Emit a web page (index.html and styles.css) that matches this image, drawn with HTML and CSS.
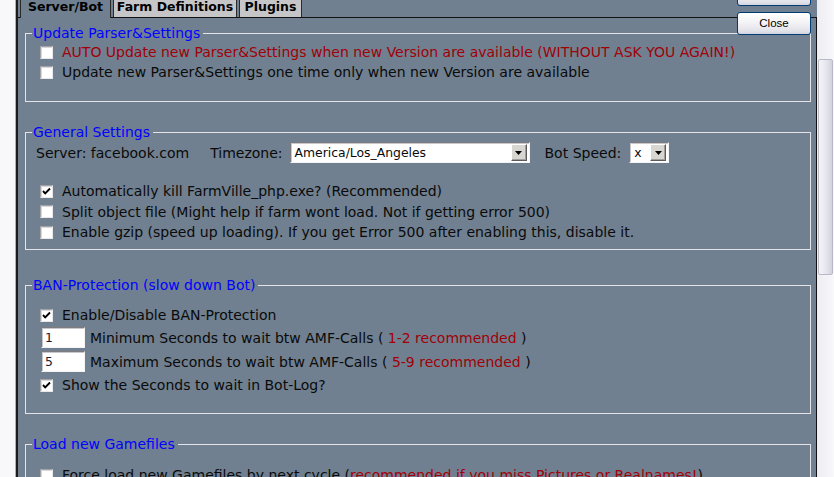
FILE: index.html
```html
<!DOCTYPE html>
<html>
<head>
<meta charset="utf-8">
<title>Settings</title>
<link rel="stylesheet" href="styles.css">
</head>
<body>
<div class="window">
  <div class="strip"></div>
  <div class="main">
    <div class="tabs">
      <div class="tab active tab-server">Server/Bot</div>
      <div class="tab tab-farm">Farm Definitions</div>
      <div class="tab tab-plugins">Plugins</div>
    </div>
    <div class="panel">
      <fieldset class="group g1">
        <legend>Update Parser&amp;Settings</legend>
        <div class="row"><span class="cb"></span><span class="red">AUTO Update new Parser&amp;Settings when new Version are available (WITHOUT ASK YOU AGAIN!)</span></div>
        <div class="row"><span class="cb"></span><span>Update new Parser&amp;Settings one time only when new Version are available</span></div>
      </fieldset>

      <fieldset class="group g2">
        <legend>General Settings</legend>
        <div class="server-row">
          <span class="server">Server: facebook.com</span>
          <span class="lbl-tz">Timezone:</span>
          <div class="select select-tz"><span class="sel-text">America/Los_Angeles</span><span class="sel-btn"><svg width="7" height="4" viewBox="0 0 7 4"><path d="M0 0h7L3.5 4z" fill="#000"/></svg></span></div>
          <span class="lbl-speed">Bot Speed:</span>
          <div class="select select-speed"><span class="sel-text">x</span><span class="sel-btn"><svg width="7" height="4" viewBox="0 0 7 4"><path d="M0 0h7L3.5 4z" fill="#000"/></svg></span></div>
        </div>
        <div class="checks">
          <div class="row r2"><span class="cb checked"><svg width="11" height="11" viewBox="0 0 11 11"><path d="M2 5l2.2 2.3L9 2.5" fill="none" stroke="#000" stroke-width="1.9"/></svg></span><span>Automatically kill FarmVille_php.exe? (Recommended)</span></div>
          <div class="row r2"><span class="cb"></span><span>Split object file (Might help if farm wont load. Not if getting error 500)</span></div>
          <div class="row r2"><span class="cb"></span><span>Enable gzip (speed up loading). If you get Error 500 after enabling this, disable it.</span></div>
        </div>
      </fieldset>

      <fieldset class="group g3">
        <legend>BAN-Protection (slow down Bot)</legend>
        <div class="row first"><span class="cb checked"><svg width="11" height="11" viewBox="0 0 11 11"><path d="M2 5l2.2 2.3L9 2.5" fill="none" stroke="#000" stroke-width="1.9"/></svg></span><span>Enable/Disable BAN-Protection</span></div>
        <div class="num-row"><span class="num">1</span><span>Minimum Seconds to wait btw AMF-Calls ( <span class="red">1-2 recommended</span> )</span></div>
        <div class="num-row"><span class="num">5</span><span>Maximum Seconds to wait btw AMF-Calls ( <span class="red">5-9 recommended</span> )</span></div>
        <div class="row last"><span class="cb checked"><svg width="11" height="11" viewBox="0 0 11 11"><path d="M2 5l2.2 2.3L9 2.5" fill="none" stroke="#000" stroke-width="1.9"/></svg></span><span>Show the Seconds to wait in Bot-Log?</span></div>
      </fieldset>

      <fieldset class="group g4">
        <legend>Load new Gamefiles</legend>
        <div class="row first"><span class="cb"></span><span>Force load new Gamefiles by next cycle (<span class="red">recommended if you miss Pictures or Realnames!</span>)</span></div>
      </fieldset>
    </div>
  </div>
  <div class="scrollbar"><div class="thumb"></div></div>
  <div class="buttons">
    <button class="btn"></button>
    <button class="btn">Close</button>
  </div>
</div>
</body>
</html>
```

FILE: styles.css
```css
* { box-sizing: border-box; }
html, body {
  margin: 0;
  padding: 0;
  width: 834px;
  height: 477px;
  overflow: hidden;
}
body {
  font-family: "DejaVu Sans", Verdana, sans-serif;
  font-size: 14px;
  color: #0a0a0a;
  background: #f8f8fb;
}
.window {
  position: relative;
  display: flex;
  width: 834px;
  height: 477px;
}
.strip {
  width: 16px;
  flex: none;
  background: #f8f8fb;
  border-right: 1px solid #b0b0b6;
}
.main {
  width: 801px;
  flex: none;
  background: #708090;
  border-left: 2px solid #1c1c1c;
  display: flex;
  flex-direction: column;
}
.tabs {
  height: 17px;
  flex: none;
  display: flex;
  align-items: flex-start;
  gap: 2px;
  padding-left: 2px;
}
.tab {
  height: 17px;
  border-left: 1px solid #2a2a2a;
  border-right: 1px solid #2a2a2a;
  background: #c6c6c8;
  font-weight: bold;
  font-size: 12.5px;
  line-height: 1;
  color: #000;
  display: flex;
  align-items: center;
  justify-content: center;
  padding-bottom: 2px;
}
.tab.active {
  background: #708090;
  height: 18px;
  margin-bottom: -1px;
  position: relative;
  z-index: 1;
  padding-bottom: 3px;
}
.tab-server { width: 91px; }
.tab-farm { width: 124px; }
.tab-plugins { width: 63px; }

.panel {
  flex: 1;
  border-top: 1px solid #111;
  border-right: 1px solid #111;
  padding-top: 6px;
}
.group {
  margin: 0 5px 0 7px;
  padding: 0 6px 19px;
  border: 1px solid #e4e4e8;
  min-width: 0;
}
.group legend {
  padding: 0 3px 0 1px;
  color: #0000ff;
  line-height: 18px;
  font-size: 14px;
}
.g2 { margin-top: 21px; padding-bottom: 6.5px; }
.g3 { margin-top: 26px; padding-bottom: 18px; }
.g4 { margin-top: 21px; }

.row {
  display: flex;
  align-items: center;
  height: 20px;
  white-space: nowrap;
}
.row.r2 { height: 20.5px; }
.g3 .row.first { margin-top: 11px; }
.g3 .row.last { margin-top: 2px; }
.g4 .row.first { margin-top: 12px; }

.cb {
  width: 13px;
  height: 13px;
  flex: none;
  margin: 0 9px 0 8px;
  background: #fff;
  border: 1px solid;
  border-color: #a4a4a8 #e8e8ec #e8e8ec #a4a4a8;
  box-shadow: inset 1px 1px 0 #d8d8dc;
  display: flex;
  align-items: center;
  justify-content: center;
}
.cb svg { display: block; }
.red { color: #a00008; }

.server-row {
  margin-top: 1px;
  height: 21px;
  display: flex;
  align-items: center;
  white-space: nowrap;
}
.server { margin-left: 4px; }
.lbl-tz { margin-left: 21px; }
.lbl-speed { margin-left: 15px; }
.select {
  margin-left: 7px;
  height: 21px;
  background: #fff;
  border: 1px solid;
  border-color: #7c7c80 #f4f4f4 #f4f4f4 #7c7c80;
  box-shadow: inset 1px 1px 0 #c8c8cc;
  display: flex;
  align-items: center;
  justify-content: space-between;
  padding: 0 2px 0 4px;
  font-size: 12.4px;
}
.select-tz { width: 240px; }
.select-speed { width: 40px; margin-left: 8px; }
.sel-btn {
  width: 16px;
  height: 17px;
  flex: none;
  background: #d8d6d0;
  border: 1px solid;
  border-color: #ffffff #5a5a5a #5a5a5a #ffffff;
  box-shadow: inset -1px -1px 0 #a0a0a0;
  display: flex;
  align-items: center;
  justify-content: center;
}
.sel-btn svg { display: block; }
.checks { margin-top: 18px; }

.num-row {
  margin-top: 1px;
  height: 23px;
  display: flex;
  align-items: center;
  white-space: nowrap;
}
.num {
  width: 44px;
  height: 21px;
  flex: none;
  margin: 0 5px 0 9px;
  background: #fff;
  border: 1px solid;
  border-color: #7c7c80 #f4f4f4 #f4f4f4 #7c7c80;
  box-shadow: inset 1px 1px 0 #c8c8cc;
  padding-left: 3px;
  font-size: 12.4px;
  color: #1a2030;
  display: flex;
  align-items: center;
}

.scrollbar {
  width: 17px;
  flex: none;
  background: linear-gradient(to right, #ececf2, #f8f8fb);
  padding: 59px 1px 0 1px;
}
.thumb {
  width: 15px;
  height: 216px;
  border: 1px solid #b8b8c8;
  border-radius: 2px;
  background: linear-gradient(to right, #f4f4f8, #e6e6ee 55%, #d2d2de);
}

.buttons {
  position: absolute;
  left: 737px;
  top: -17px;
  display: flex;
  flex-direction: column;
  gap: 6px;
  z-index: 2;
}
.btn {
  width: 74px;
  height: 23px;
  padding: 0;
  border: 1px solid #003c74;
  border-radius: 3px;
  background: linear-gradient(#ffffff, #f4f4f6 45%, #e2e2ea 85%, #d4d4e0);
  font-family: "Liberation Sans", Arial, sans-serif;
  font-size: 11.5px;
  color: #000;
  line-height: 21px;
}
```
